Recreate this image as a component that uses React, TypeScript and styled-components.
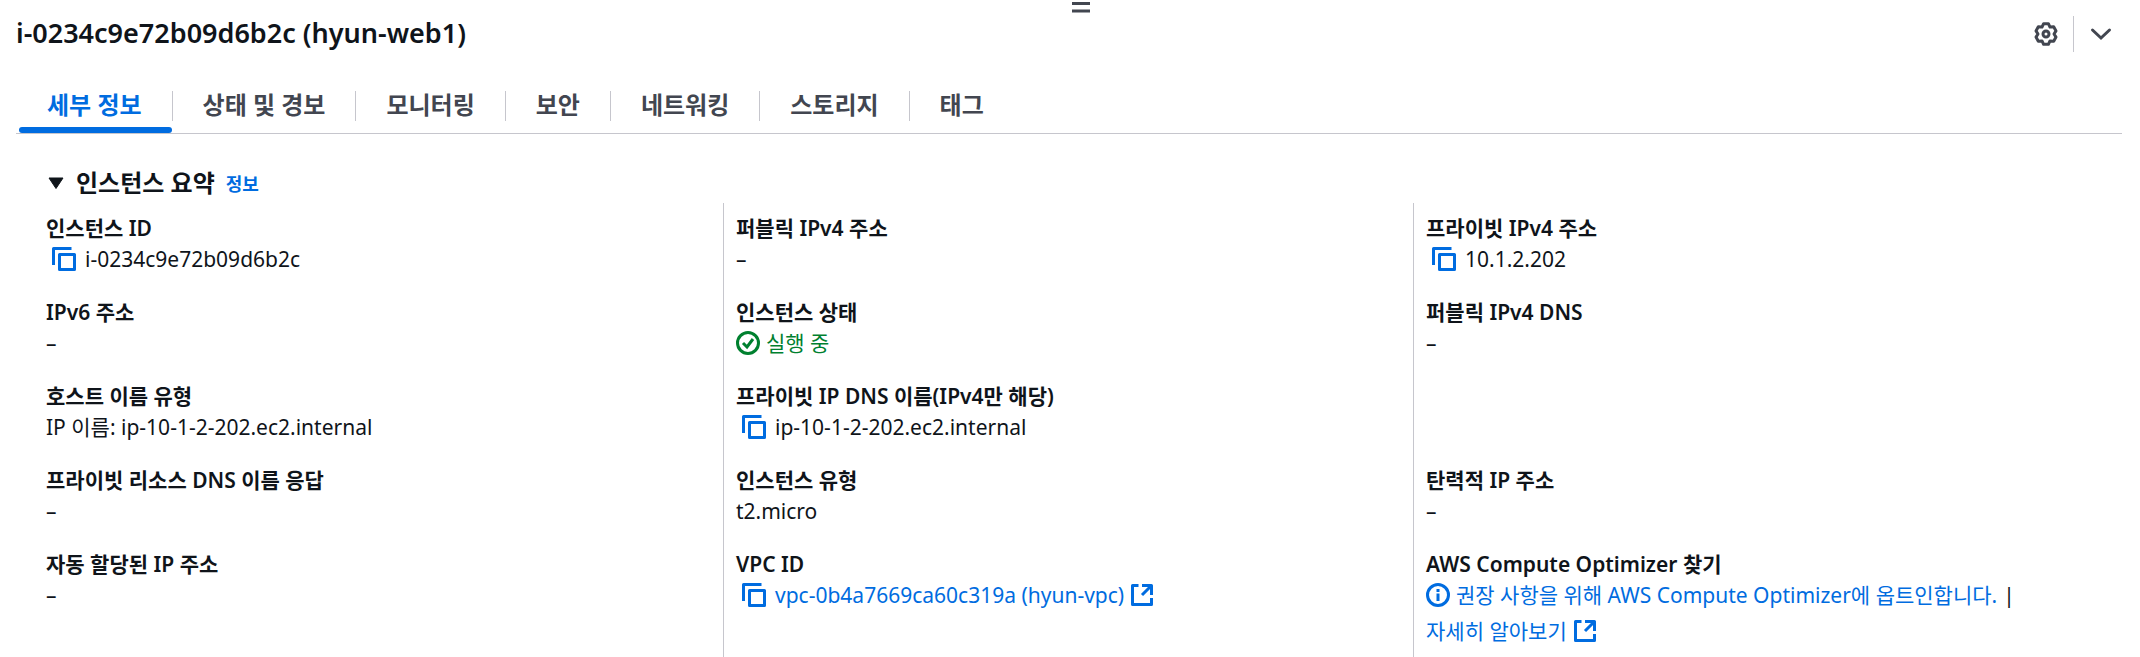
import React from 'react';
import styled, { createGlobalStyle } from 'styled-components';

const colors = {
  text: '#0f141a',
  muted: '#424650',
  link: '#006ce0',
  success: '#00802f',
  divider: '#c6c6cd',
};

const GlobalStyle = createGlobalStyle`
  * { box-sizing: border-box; }
  body {
    margin: 0;
    background: #fff;
    color: ${colors.text};
    font-family: "Noto Sans", "Noto Sans CJK KR", sans-serif;
    font-size: 21px;
    line-height: 30px;
  }
  button {
    font: inherit;
    color: inherit;
    background: none;
    border: 0;
    padding: 0;
    cursor: pointer;
  }
`;

const Panel = styled.section`
  display: flex;
  flex-direction: column;
`;

const ResizeHandle = styled.button`
  align-self: center;
  display: flex;
  height: 16px;
  margin-left: 22px;
`;

const Header = styled.header`
  display: flex;
  align-items: center;
  justify-content: space-between;
  height: 36px;
  padding: 0 27px 0 16px;
`;

const Title = styled.h2`
  margin: 0 0 2px;
  font-size: 27px;
  line-height: 34px;
  font-weight: 600;
`;

const Actions = styled.div`
  display: flex;
  align-items: center;
  color: ${colors.muted};
`;

const IconButton = styled.button`
  display: flex;
`;

const ActionDivider = styled.span`
  width: 1px;
  height: 36px;
  margin: 0 15px;
  background: ${colors.divider};
`;

const TabList = styled.div`
  display: flex;
  height: 59px;
  margin: 23px 18px 0 16px;
  padding-left: 3px;
  border-bottom: 1px solid ${colors.divider};
`;

const Tab = styled.button<{ $active?: boolean }>`
  display: flex;
  flex-direction: column;
  justify-content: space-between;
  font-size: 24px;
  font-weight: 700;
  color: ${p => (p.$active ? colors.link : colors.muted)};

  &::after {
    content: '';
    height: 6px;
    align-self: stretch;
    margin-right: 1px;
    border-radius: 3px;
    background: ${p => (p.$active ? colors.link : 'transparent')};
  }
`;

const TabLabel = styled.span`
  height: 30px;
  margin-top: 16px;
  padding: 0 30px;
  line-height: 27px;
  border-right: 1px solid ${colors.divider};

  ${Tab}:first-child & { padding-left: 28px; }
  ${Tab}:last-child & { border-right: 0; }
`;

const Summary = styled.div`
  padding: 31px 19px 0 17px;
  margin: 0 18px 0 16px;
`;

const SummaryHeader = styled.div`
  display: flex;
  align-items: center;
  height: 36px;
  margin-bottom: 2px;
  padding-left: 14px;
`;

const SummaryToggle = styled.button`
  display: flex;
  align-items: center;
  gap: 11px;
  font-size: 24px;
  font-weight: 700;
`;

const InfoLink = styled.a`
  margin-left: 11px;
  padding-top: 1px;
  font-size: 18px;
  font-weight: 700;
  color: ${colors.link};
  text-decoration: none;
`;

const Columns = styled.div`
  display: grid;
  grid-template-columns: repeat(3, minmax(0, 1fr));
`;

const Column = styled.dl`
  display: flex;
  flex-direction: column;
  gap: 24px;
  margin: 0;
  padding: 11px 12px 12px;
  border-left: 1px solid ${colors.divider};

  &:first-child { border-left-color: transparent; }
`;

const Field = styled.div`
  min-height: 60px;
`;

const Label = styled.dt`
  height: 30px;
  line-height: 28px;
  font-weight: 600;
`;

const Value = styled.dd`
  display: flex;
  flex-wrap: wrap;
  align-items: center;
  gap: 6px;
  margin: 0;
`;

const CopyButton = styled.button`
  display: flex;
  padding: 0 3px 0 6px;
  color: ${colors.link};
`;

const ValueLink = styled.a`
  display: flex;
  align-items: center;
  gap: 6px;
  color: ${colors.link};
  text-decoration: none;
`;

const Status = styled.span`
  display: flex;
  align-items: center;
  gap: 6px;
  color: ${colors.success};
`;

const GearIcon = () => (
  <svg width="24" height="24" viewBox="0 0 24 24" fill="none" stroke="currentColor" strokeWidth="3" strokeLinejoin="round">
    <path d="M9.6 1.7H14.4L16 5.1L19.7 4.8L22 8.900L20 12L22 15.100L19.700 19.200L16 18.900L14.400 22.300H9.600L8 18.900L4.300 19.200L2 15.100L4 12L2 8.900L4.300 4.800L8 5.100Z" />
    <circle cx="12" cy="12" r="3" />
  </svg>
);

const ChevronIcon = () => (
  <svg width="24" height="24" viewBox="0 0 24 24" fill="none" stroke="currentColor" strokeWidth="3" strokeLinecap="round">
    <path d="M3.500 8l8.500 8 8.500-8" />
  </svg>
);

const CopyIcon = () => (
  <svg width="24" height="24" viewBox="0 0 24 24" fill="none" stroke="currentColor" strokeWidth="3" strokeLinejoin="round">
    <path d="M7.500 7.500h15v15h-15z" />
    <path d="M1.500 18V1.500H19.500" />
  </svg>
);

const ExternalIcon = () => (
  <svg width="24" height="24" viewBox="0 0 24 24" fill="none" stroke="currentColor" strokeWidth="3" strokeLinejoin="round">
    <path d="M8.500 2.500h-6v19h19V15" />
    <path d="M12 2.500h9.500V12M21.500 2.500L12 12" />
  </svg>
);

const CheckCircleIcon = () => (
  <svg width="24" height="24" viewBox="0 0 24 24" fill="none" stroke="currentColor" strokeWidth="3">
    <circle cx="12" cy="12" r="10.500" />
    <path d="M7 12l4 4 6-8" />
  </svg>
);

const InfoCircleIcon = () => (
  <svg width="24" height="24" viewBox="0 0 24 24" fill="none" stroke="currentColor" strokeWidth="3">
    <circle cx="12" cy="12" r="10.500" />
    <path d="M12 10.500V18M12 6v3" />
  </svg>
);

const CaretIcon = () => (
  <svg width="18" height="18" viewBox="0 0 18 18" fill="currentColor" stroke="currentColor" strokeLinejoin="round">
    <path d="M2 4h14L9 14.500z" />
  </svg>
);

const HandleIcon = () => (
  <svg width="18" height="16" viewBox="0 0 18 16" stroke={colors.muted} strokeWidth="3">
    <path d="M0 3.500h18M0 11h18" />
  </svg>
);

const Copyable = ({ text, children }: { text: string; children?: React.ReactNode }) => (
  <>
    <CopyButton type="button" aria-label={`${text} 복사`}>
      <CopyIcon />
    </CopyButton>
    {children ?? <span>{text}</span>}
  </>
);

type FieldData = { label: string; value: React.ReactNode } | null;

const columns: FieldData[][] = [
  [
    { label: '인스턴스 ID', value: <Copyable text="i-0234c9e72b09d6b2c" /> },
    { label: 'IPv6 주소', value: '–' },
    { label: '호스트 이름 유형', value: 'IP 이름: ip-10-1-2-202.ec2.internal' },
    { label: '프라이빗 리소스 DNS 이름 응답', value: '–' },
    { label: '자동 할당된 IP 주소', value: '–' },
  ],
  [
    { label: '퍼블릭 IPv4 주소', value: '–' },
    { label: '인스턴스 상태', value: <Status><CheckCircleIcon />실행 중</Status> },
    { label: '프라이빗 IP DNS 이름(IPv4만 해당)', value: <Copyable text="ip-10-1-2-202.ec2.internal" /> },
    { label: '인스턴스 유형', value: 't2.micro' },
    {
      label: 'VPC ID',
      value: (
        <Copyable text="vpc-0b4a7669ca60c319a">
          <ValueLink href="#vpc">vpc-0b4a7669ca60c319a (hyun-vpc)<ExternalIcon /></ValueLink>
        </Copyable>
      ),
    },
  ],
  [
    { label: '프라이빗 IPv4 주소', value: <Copyable text="10.1.2.202" /> },
    { label: '퍼블릭 IPv4 DNS', value: '–' },
    null,
    { label: '탄력적 IP 주소', value: '–' },
    {
      label: 'AWS Compute Optimizer 찾기',
      value: (
        <>
          <ValueLink href="#optimizer"><InfoCircleIcon />권장 사항을 위해 AWS Compute Optimizer에 옵트인합니다.</ValueLink>
          <span>|</span>
          <ValueLink href="#learn-more">자세히 알아보기<ExternalIcon /></ValueLink>
        </>
      ),
    },
  ],
];

const tabs = ['세부 정보', '상태 및 경보', '모니터링', '보안', '네트워킹', '스토리지', '태그'];

export default function App() {
  return (
    <Panel lang="ko">
      <GlobalStyle />
      <ResizeHandle type="button" aria-label="패널 크기 조정"><HandleIcon /></ResizeHandle>
      <Header>
        <Title>i-0234c9e72b09d6b2c (hyun-web1)</Title>
        <Actions>
          <IconButton type="button" aria-label="기본 설정"><GearIcon /></IconButton>
          <ActionDivider />
          <IconButton type="button" aria-label="패널 닫기"><ChevronIcon /></IconButton>
        </Actions>
      </Header>
      <TabList role="tablist">
        {tabs.map((tab, i) => (
          <Tab key={tab} type="button" role="tab" aria-selected={i === 0} $active={i === 0}>
            <TabLabel>{tab}</TabLabel>
          </Tab>
        ))}
      </TabList>
      <Summary>
        <SummaryHeader>
          <SummaryToggle type="button" aria-expanded="true"><CaretIcon />인스턴스 요약</SummaryToggle>
          <InfoLink href="#info">정보</InfoLink>
        </SummaryHeader>
        <Columns>
          {columns.map((fields, c) => (
            <Column key={c}>
              {fields.map((field, f) => (
                <Field key={f}>
                  {field && <Label>{field.label}</Label>}
                  {field && <Value>{field.value}</Value>}
                </Field>
              ))}
            </Column>
          ))}
        </Columns>
      </Summary>
    </Panel>
  );
}
